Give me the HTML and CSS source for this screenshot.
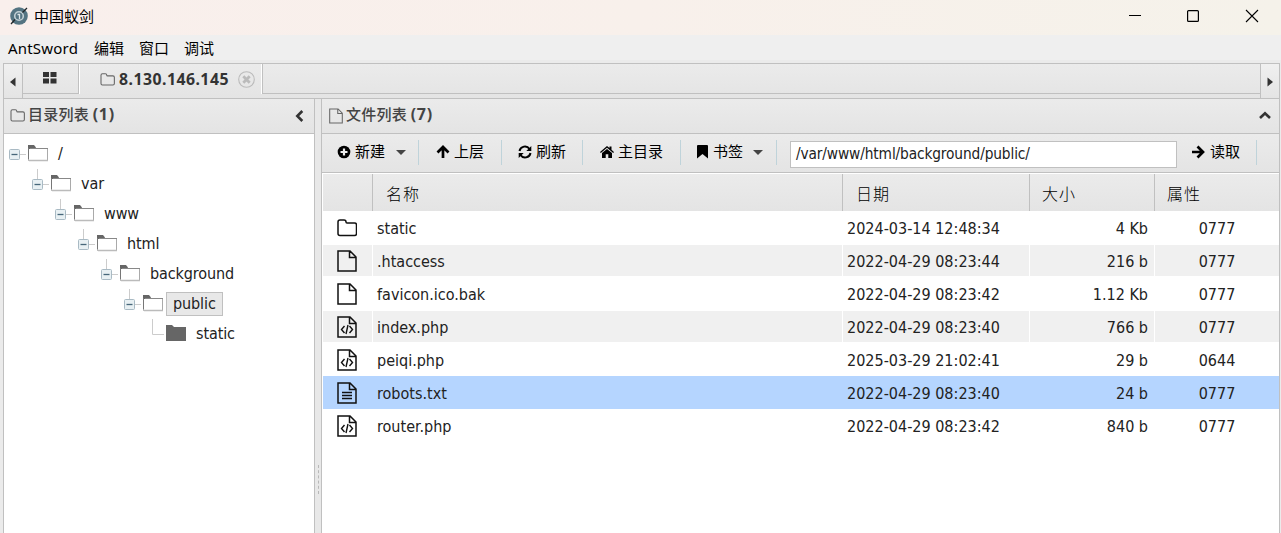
FILE: index.html
```
<!DOCTYPE html>
<html lang="zh-CN">
<head>
<meta charset="utf-8">
<title>中国蚁剑</title>
<link rel="stylesheet" href="styles.css">
</head>
<body>
<svg width="0" height="0" class="defs">
  <symbol id="folder-line" viewBox="0 0 20 18"><path d="M1 14.5V3Q1 1 3 1H7Q9 1 9 3Q9 4 10 4H17.500Q19.500 4 19.500 6V14.500Q19.500 16.500 17.500 16.500H3Q1 16.500 1 14.500Z" fill="none" stroke="currentColor" stroke-width="1.500"/></symbol>
  <symbol id="file" viewBox="0 0 20 22"><path d="M1 1H13L19 7V21H1ZM12.500 1V7.500H19" fill="none" stroke="currentColor" stroke-width="1.500"/></symbol>
  <symbol id="code" viewBox="0 0 20 22"><use href="#file"/><path d="M7.500 10L4.500 13.500L7.500 17M12.500 10L15.500 13.500L12.500 17M11 9L9 18" fill="none" stroke="currentColor" stroke-width="1.400"/></symbol>
  <symbol id="text" viewBox="0 0 20 22"><use href="#file"/><path d="M5 10.500H15M5 13.500H15M5 16.500H15" fill="none" stroke="currentColor" stroke-width="1.500"/></symbol>
  <symbol id="folder-open" viewBox="0 0 21 17"><path d="M.500 3V15.500H19.500V3.500H2" fill="#fff" stroke="#aaa"/><path d="M0 0H6L8 2.500V4H0Z" fill="#666"/><path d="M.500 3V14" stroke="#777"/><path d="M2 3.500H20" stroke="#888"/><path d="M1 15.500H20" stroke="#bbb" stroke-width="1.500"/></symbol>
  <symbol id="minus" viewBox="0 0 11 11"><rect x=".5" y=".5" width="10" height="10" rx="1" fill="#e8f0f3" stroke="#a9bac4"/><path d="M2.500 5.500H8.500" stroke="#47677a" stroke-width="1.300"/></symbol>
</svg>
<header class="titlebar">
  <svg class="logo" width="20" height="20" viewBox="0 0 20 20"><circle cx="10" cy="10" r="8.800" fill="#547482"/><circle cx="10" cy="10" r="4.300" fill="none" stroke="#c3d0d5" stroke-width="1.600"/><path d="M8.500 8.500H10.500V13" fill="none" stroke="#dbe4e7" stroke-width="1.300"/><path d="M2 18L6 13.500M13.500 6.500L18 2" stroke="#20262a" stroke-width="1.300"/></svg>
  <span class="app-name">中国蚁剑</span>
  <svg class="window-buttons" width="132" height="14" viewBox="0 0 132 14"><path d="M0 6.500H12" stroke="#000"/><rect x="58.600" y="1.600" width="10.800" height="10.800" rx="1" fill="none" stroke="#000" stroke-width="1.200"/><path d="M117 1L129 13M129 1L117 13" stroke="#000" stroke-width="1.100"/></svg>
</header>
<nav class="menu"><span class="brand">AntSword</span><span>编辑</span><span>窗口</span><span>调试</span></nav>
<main class="app">
  <div class="tabbar">
    <div class="scroll"><svg width="6" height="10" viewBox="0 0 6 10"><path d="M5.500 .5V9.500L0 5Z" fill="#333"/></svg></div>
    <div class="tabs">
      <div class="tab home"><svg width="15" height="12" viewBox="0 0 15 12"><path d="M1 0H7V5H1ZM8.500 0H14.500V5H8.500ZM1 6.500H7V11.500H1ZM8.500 6.500H14.500V11.500H8.500Z" fill="#333"/></svg></div>
      <div class="tab current"><svg class="tab-folder" width="15" height="13"><use href="#folder-line"/></svg><b>8.130.146.145</b><svg class="close" width="17" height="17" viewBox="0 0 17 17"><circle cx="8.500" cy="8.500" r="7.800" fill="none" stroke="#bbb" stroke-width="1.100"/><path d="M5.300 5.300L11.700 11.700M11.700 5.300L5.300 11.700" stroke="#bbb" stroke-width="2.800"/></svg></div>
      <div class="tab-rest"></div>
    </div>
    <div class="scroll right"><svg width="6" height="10" viewBox="0 0 6 10"><path d="M.5 .5V9.500L6 5Z" fill="#333"/></svg></div>
  </div>
  <div class="panes">
    <section class="sidebar">
      <div class="pane-title"><svg width="15" height="13"><use href="#folder-line"/></svg><b>目录列表 <span class="count">(1)</span></b><svg class="collapse-left" width="9" height="12" viewBox="0 0 9 12"><path d="M7.300 1L2.300 6L7.300 11" fill="none" stroke="#333" stroke-width="2.600"/></svg></div>
      <ul class="tree">
        <li class="root"><svg class="toggle"><use href="#minus"/></svg><i></i><svg class="node"><use href="#folder-open"/></svg><span>/</span></li>
        <li class="l1"><svg class="toggle"><use href="#minus"/></svg><i></i><svg class="node"><use href="#folder-open"/></svg><span>var</span></li>
        <li class="l2"><svg class="toggle"><use href="#minus"/></svg><i></i><svg class="node"><use href="#folder-open"/></svg><span>www</span></li>
        <li class="l3"><svg class="toggle"><use href="#minus"/></svg><i></i><svg class="node"><use href="#folder-open"/></svg><span>html</span></li>
        <li class="l4"><svg class="toggle"><use href="#minus"/></svg><i></i><svg class="node"><use href="#folder-open"/></svg><span>background</span></li>
        <li class="l5"><svg class="toggle"><use href="#minus"/></svg><i></i><svg class="node"><use href="#folder-open"/></svg><span class="picked">public</span></li>
        <li class="leaf"><svg class="elbow" width="12" height="17" viewBox="0 0 12 17"><path d="M.5 0V15.500H12" fill="none" stroke="#ccc"/></svg><svg class="node" viewBox="0 0 21 17"><path d="M0 0H6L8 2H20V16H0Z" fill="#666"/></svg><span>static</span></li>
      </ul>
    </section>
    <div class="splitter"><i></i></div>
    <section class="files">
      <div class="pane-title"><svg width="14" height="16"><use href="#file"/></svg><b>文件列表 <span class="count">(7)</span></b><svg class="collapse-up" width="12" height="9" viewBox="0 0 12 9"><path d="M1 7L6 2.200L11 7" fill="none" stroke="#333" stroke-width="2.600"/></svg></div>
      <div class="toolbar">
        <div class="tool new"><svg width="14" height="14" viewBox="0 0 14 14"><circle cx="7" cy="7" r="6.300"/><path d="M7 3.500V10.500M3.500 7H10.500" stroke="#eee" stroke-width="2.200"/></svg><span>新建</span><i class="caret"></i></div>
        <div class="tool up"><svg width="14" height="14" viewBox="0 0 14 14"><path d="M7 13V2M1.500 7.500L7 2L12.500 7.500" fill="none" stroke="#000" stroke-width="2.700"/></svg><span>上层</span></div>
        <div class="tool refresh"><svg width="14" height="14" viewBox="0 0 14 14"><path d="M1.500 6A5.500 5.500 0 0 1 11.500 4M12.500 8A5.500 5.500 0 0 1 2.500 10" fill="none" stroke="#000" stroke-width="2"/><path d="M13.300 1V6H8.300ZM.7 13V8H5.700Z"/></svg><span>刷新</span></div>
        <div class="tool homedir"><svg width="14" height="14" viewBox="0 0 14 14"><path d="M0 7L7 1L9.500 3V1.500H11.500V4.800L14 7L13.200 8L7 2.800L.8 8Z"/><path d="M2 8L7 4L12 8V13H8.300V9.300H5.700V13H2Z"/></svg><span>主目录</span></div>
        <div class="tool bookmark"><svg width="11" height="14" viewBox="0 0 11 14"><path d="M0 1Q0 0 1 0H10Q11 0 11 1V13.500L5.500 9L0 13.500Z"/></svg><span>书签</span><i class="caret"></i></div>
        <div class="path">/var/www/html/background/public/</div>
        <div class="tool read"><svg width="14" height="14" viewBox="0 0 14 14"><path d="M1 7H12M6.500 1.500L12 7L6.500 12.500" fill="none" stroke="#000" stroke-width="2.700"/></svg><span>读取</span></div>
      </div>
      <div class="grid">
        <div class="row head"><div></div><div>名称</div><div>日期</div><div>大小</div><div>属性</div></div>
        <div class="row"><div><svg class="folder-ico" width="20" height="18"><use href="#folder-line"/></svg></div><div>static</div><div>2024-03-14 12:48:34</div><div>4 Kb</div><div>0777</div></div>
        <div class="row odd"><div><svg width="20" height="22"><use href="#file"/></svg></div><div>.htaccess</div><div>2022-04-29 08:23:44</div><div>216 b</div><div>0777</div></div>
        <div class="row"><div><svg width="20" height="22"><use href="#file"/></svg></div><div>favicon.ico.bak</div><div>2022-04-29 08:23:42</div><div>1.12 Kb</div><div>0777</div></div>
        <div class="row odd"><div><svg width="20" height="22"><use href="#code"/></svg></div><div>index.php</div><div>2022-04-29 08:23:40</div><div>766 b</div><div>0777</div></div>
        <div class="row"><div><svg width="20" height="22"><use href="#code"/></svg></div><div>peiqi.php</div><div>2025-03-29 21:02:41</div><div>29 b</div><div>0644</div></div>
        <div class="row selected"><div><svg width="20" height="22"><use href="#text"/></svg></div><div>robots.txt</div><div>2022-04-29 08:23:40</div><div>24 b</div><div>0777</div></div>
        <div class="row"><div><svg width="20" height="22"><use href="#code"/></svg></div><div>router.php</div><div>2022-04-29 08:23:42</div><div>840 b</div><div>0777</div></div>
      </div>
    </section>
  </div>
</main>
</body>
</html>
```
FILE: styles.css
```
* { box-sizing: border-box; }
html, body { height: 100%; }
body { margin: 0; overflow: hidden; display: flex; flex-direction: column; background: #ebebeb; color: #222; font: 16px/20px "DejaVu Sans Condensed", "Noto Sans CJK SC", sans-serif; }
svg { display: block; flex: none; }
.defs { position: absolute; }
span, b { white-space: nowrap; }
.titlebar { height: 35px; flex: none; display: flex; align-items: center; padding: 0 20px 3px 9px; background: linear-gradient(90deg, #f9efec, #f8f0eb 50%, #f5f2ea); }
.app-name { margin: -1px 0 0 5px; font: 15px/20px "Noto Sans CJK SC", sans-serif; color: #000; }
.window-buttons { margin-left: auto; width: 132px; }
.menu { height: 28px; flex: none; display: flex; gap: 15px; padding: 3px 8px 0; background: linear-gradient(#efefef 25px, #ebebeb 25px); font: 15px/20px "Noto Sans CJK SC", sans-serif; color: #000; }
.brand { width: 71px; font: 15px/20px "Noto Sans", sans-serif; letter-spacing: .2px; }
.app { flex: 1; min-height: 0; display: flex; flex-direction: column; margin: 0 1px 0 3px; border: 1px solid #c0c0c0; border-bottom: 0; background: #e5e5e5; }
.tabbar { height: 34px; flex: none; display: flex; background: linear-gradient(#ebebeb, #e4e4e4); }
.scroll { width: 19px; border-right: 1px solid #c0c0c0; padding: 13px 0 0 6px; background: linear-gradient(#f0f0f0, #e4e4e4); }
.scroll.right { border: 0; border-left: 1px solid #c0c0c0; }
.tabs { flex: 1; height: 30px; display: flex; }
.tab { display: flex; align-items: center; }
.home { width: 56px; padding: 0 0 1px 19px; border-right: 1px solid #c0c0c0; border-bottom: 1px solid #c0c0c0; }
.current { width: 184px; border-left: 1px solid #fff; border-right: 1px solid #c0c0c0; box-shadow: inset -1px 0 #fff; padding-left: 20px; }
.current b { width: 114px; margin: -1px 0 0 4px; font: bold 15.800px/20px "Noto Sans", sans-serif; letter-spacing: .48px; color: #333; }
.close { margin: 1px 0 0 5px; }
.tab-folder { color: #666; }
.tab-rest { flex: 1; border-bottom: 1px solid #c0c0c0; }
.panes { flex: 1; min-height: 0; display: flex; border-top: 1px solid #c0c0c0; }
.sidebar { width: 311px; flex: none; display: flex; flex-direction: column; border-right: 1px solid #c0c0c0; }
.pane-title { height: 35px; flex: none; display: flex; align-items: center; padding: 0 10px 1px 6px; background: linear-gradient(#ebebeb, #e4e4e4); border-bottom: 1px solid #c0c0c0; color: #444; }
.pane-title b { margin: -3px 0 0 3px; font: 500 15px/20px "Noto Sans CJK SC", sans-serif; letter-spacing: .25px; }
.count { font: bold 16px/20px "Noto Sans", sans-serif; letter-spacing: .8px; }
.collapse-left, .collapse-up { margin-left: auto; }
.pane-title > svg { color: #666; }
.tree { flex: 1; margin: 0; padding: 5px 0 0 5px; background: #fff; list-style: none; }
.tree li { height: 30px; display: flex; align-items: center; background: linear-gradient(#ccc, #ccc) no-repeat; background-size: 1px 10px; }
.tree .toggle { width: 11px; height: 11px; }
.tree i { width: 6px; height: 1px; background: #ccc; }
.node { width: 21px; height: 17px; margin: -2px 0 0 2px; }
.tree span { height: 24px; margin-left: 2px; padding: 1px 6px; border: 1px solid transparent; letter-spacing: -.1px; }
.tree .picked { background: #e8e8e8; border-color: #c0c0c0; }
.tree .root { background: none; }
.tree .l1 { margin-left: 23px; background-position: 5px 0; }
.tree .l2 { margin-left: 46px; background-position: 5px 0; }
.tree .l3 { margin-left: 69px; background-position: 5px 0; }
.tree .l4 { margin-left: 92px; background-position: 5px 0; }
.tree .l5 { margin-left: 115px; background-position: 5px 0; }
.tree .leaf { margin-left: 143px; background: none; }
.elbow { margin-top: -14px; }
.splitter { width: 6px; flex: none; background: #e8e8e8; display: flex; flex-direction: column; align-items: center; padding-top: 366px; }
.splitter i { height: 29px; border-left: 1px dashed #b8b8b8; }
.files { flex: 1; min-width: 0; display: flex; flex-direction: column; border-left: 1px solid #c0c0c0; background: #fff; }
.files .pane-title { padding: 0 8px 1px 7px; }
.toolbar { height: 39px; flex: none; display: flex; background: linear-gradient(#ebebeb, #e4e4e4); border-bottom: 1px solid #c0c0c0; padding-top: 6px; color: #000; }
.tool { height: 25px; display: flex; align-items: center; border-right: 1px solid #bfd3da; padding: 0 0 1px 15px; font: 15px/20px "Noto Sans CJK SC", sans-serif; }
.tool span { margin: -2px 0 0 4px; }
.new { width: 97px; }
.up { width: 83px; padding-left: 17px; }
.refresh { width: 81px; padding-left: 16px; }
.homedir { width: 98px; padding-left: 17px; }
.bookmark { width: 96px; padding-left: 16px; }
.bookmark span { margin-left: 5px; }
.caret { border: 5px solid transparent; border-top-color: #444; border-bottom: 0; margin: 1px 0 0 11px; }
.bookmark .caret { margin-left: 10px; }
.path { width: 387px; height: 27px; margin: 1px 0 0 13px; padding: 2px 5px; border: 1px solid #c0c0c0; background: #fff; color: #222; font-size: 15.300px; letter-spacing: -.13px; white-space: nowrap; }
.read { width: 80px; padding-left: 14px; }
.read span { margin-left: 5px; }
.grid { padding: 1px 0 0 1px; }
.row { height: 33px; display: grid; grid-template-columns: 50px 470px 187px 125px 1fr; }
.row > div { display: flex; align-items: center; min-width: 0; padding: 2px 4px 0; border-right: 1px solid #fff; white-space: nowrap; }
.row > div:last-child { border-right: 0; justify-content: center; }
.row > div:nth-child(4) { justify-content: flex-end; padding-right: 6px; }
.row > div:first-child { padding: 0 0 0 14px; color: #111; }
.odd > div { background: #f0f0f0; border-top: 1px solid #fff; border-bottom: 1px solid #fff; }
.selected { background: #b5d5ff; }
.selected > div { border-color: transparent; }
.head { height: 37px; background: linear-gradient(#ebebeb, #e4e4e4); font: 300 16px/20px "Noto Sans CJK SC", sans-serif; letter-spacing: 1px; color: #000; }
.head > div { border-right-color: #c0c0c0; padding: 0 13px; }
.head > div:last-child, .head > div:nth-child(4) { justify-content: flex-start; padding-left: 12px; }
```
